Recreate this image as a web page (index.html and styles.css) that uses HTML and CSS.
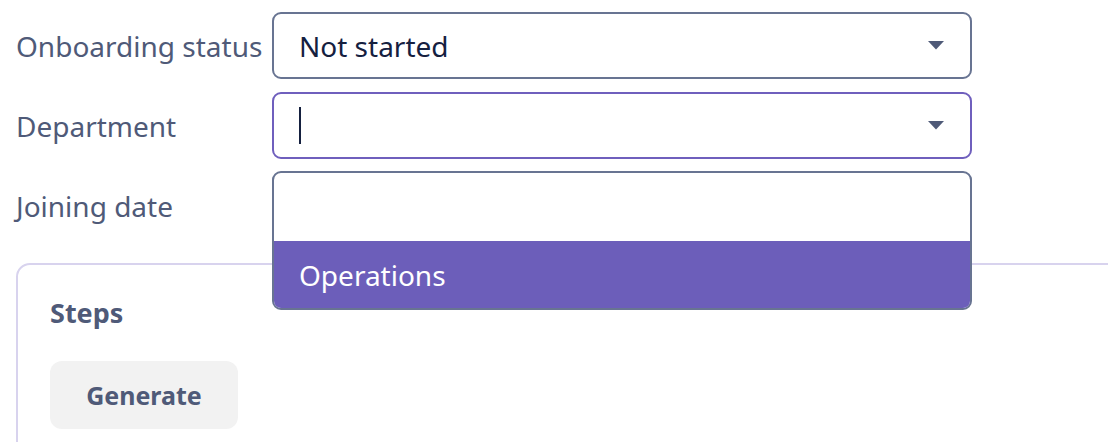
FILE: index.html
```html
<!DOCTYPE html>
<html>
<head>
<meta charset="utf-8">
<link rel="stylesheet" href="styles.css">
</head>
<body>
<div class="page">
  <div class="form">
    <div class="row">
      <div class="label">Onboarding status</div>
      <div class="select">
        <span class="value">Not started</span>
        <svg class="caret" width="16" height="9" viewBox="0 0 16 9"><path d="M0 0 H16 L8 8.5 Z" fill="#4f5a78"/></svg>
      </div>
    </div>
    <div class="row">
      <div class="label">Department</div>
      <div class="select focused">
        <span class="cursor"></span>
        <svg class="caret" width="16" height="9" viewBox="0 0 16 9"><path d="M0 0 H16 L8 8.5 Z" fill="#4f5a78"/></svg>
        <div class="menu">
          <div class="option"></div>
          <div class="option active">Operations</div>
        </div>
      </div>
    </div>
    <div class="row">
      <div class="label">Joining date</div>
      <div class="select plain"></div>
    </div>
  </div>
  <div class="card">
    <div class="card-title">Steps</div>
    <button class="btn">Generate</button>
  </div>
</div>
</body>
</html>
```

FILE: styles.css
```css
html, body {
  margin: 0;
  padding: 0;
  background: #ffffff;
  overflow: hidden;
}
body {
  font-family: "Noto Sans", "Open Sans", sans-serif;
  width: 1108px;
  height: 442px;
}
.page {
  padding: 12px 0 0 16px;
}
.form {
  display: flex;
  flex-direction: column;
  gap: 13px;
}
.row {
  display: grid;
  grid-template-columns: 256px 700px;
  align-items: center;
}
.label {
  font-size: 28px;
  color: #4f5a78;
  line-height: 36px;
}
.select {
  position: relative;
  box-sizing: border-box;
  height: 67px;
  border: 2px solid #687492;
  border-radius: 9px;
  display: flex;
  align-items: center;
  padding: 0 26px 0 25px;
  background: #fff;
}
.select.focused {
  border-color: #6f5fbd;
}
.value {
  font-size: 28px;
  color: #15203f;
  flex: 1;
}
.cursor {
  display: block;
  width: 2px;
  height: 37px;
  background: #15203f;
  margin-right: auto;
}
.caret {
  margin-left: auto;
  display: block;
}
.menu {
  position: absolute;
  left: -2px;
  right: -2px;
  top: 77px;
  z-index: 5;
  border: 2px solid #687492;
  border-radius: 9px;
  background: #fff;
  overflow: hidden;
  box-sizing: border-box;
}
.option {
  height: 68px;
  box-sizing: border-box;
  padding: 0 25px;
  display: flex;
  align-items: center;
  font-size: 28px;
  color: #15203f;
}
.option.active {
  background: #6c5eba;
  color: #ffffff;
  height: 67px;
}
.card {
  margin-top: 24px;
  margin-right: -40px;
  border: 2px solid #d8d3ee;
  border-radius: 14px;
  padding: 30px 32px 40px;
  height: 200px;
}
.card-title {
  font-size: 27px;
  font-weight: 700;
  color: #4f5a78;
  line-height: 36px;
}
.btn {
  margin-top: 30px;
  font-family: inherit;
  font-size: 25px;
  font-weight: 700;
  color: #4f5a78;
  background: #f2f2f2;
  border: none;
  border-radius: 12px;
  width: 188px;
  height: 68px;
  padding: 0;
}
```
